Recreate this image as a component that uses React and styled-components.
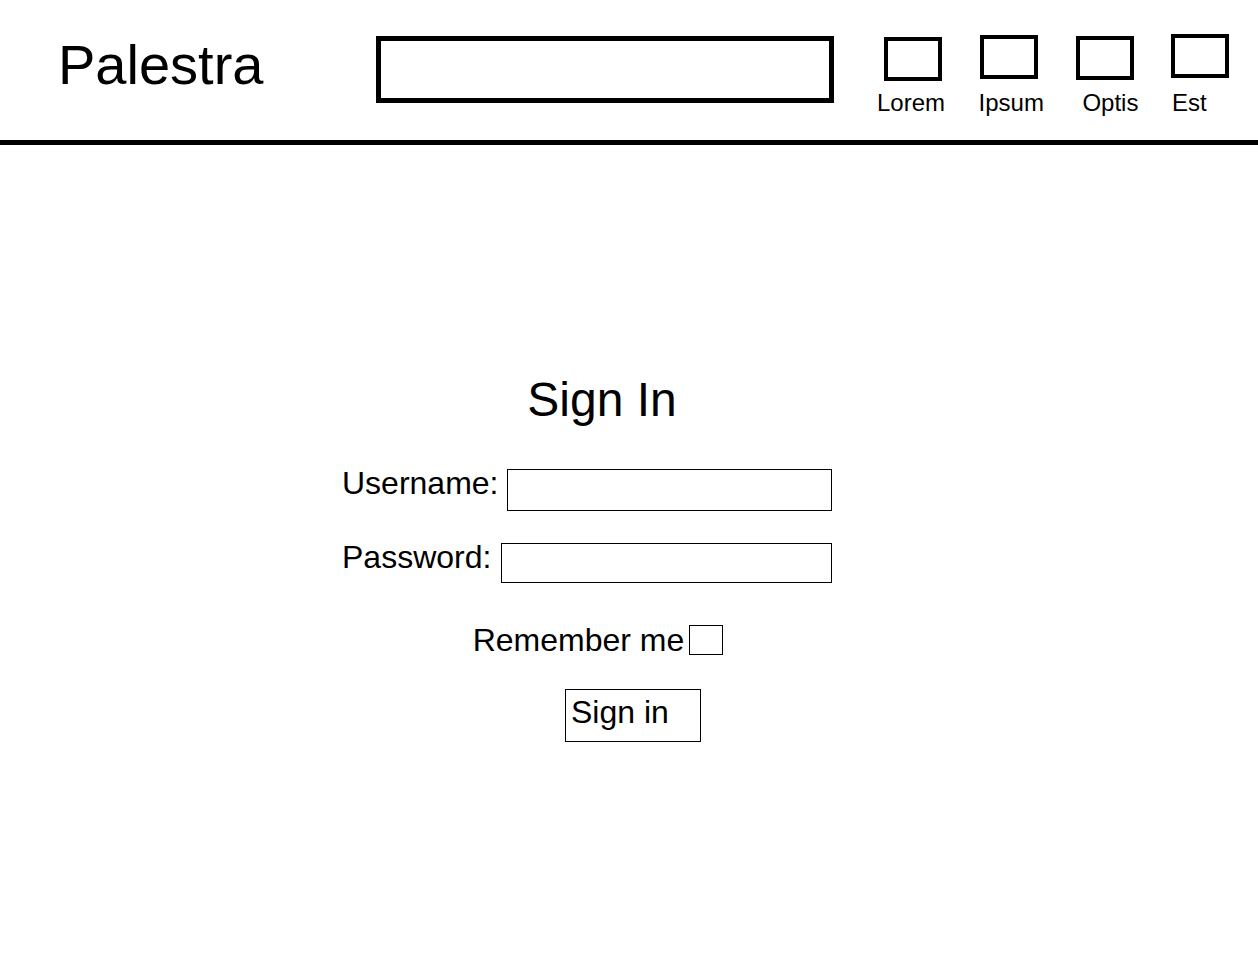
import React from "react";
import styled, { createGlobalStyle } from "styled-components";

const GlobalStyle = createGlobalStyle`
  html, body {
    margin: 0;
    padding: 0;
    background: #fff;
    color: #000;
    font-family: "Liberation Sans", Arial, sans-serif;
  }
  * {
    box-sizing: border-box;
  }
`;

const navItems = [
  { label: "Lorem", boxLeft: 8, boxTop: 3, labelLeft: 1 },
  { label: "Ipsum", boxLeft: 2, boxTop: 1, labelLeft: 1 },
  { label: "Optis", boxLeft: 0, boxTop: 2, labelLeft: 6 },
  { label: "Est", boxLeft: 0, boxTop: 0, labelLeft: 1 },
];

function App() {
  return (
    <Page>
      <GlobalStyle />
      <Header>
        <Brand>Palestra</Brand>
        <SearchBox type="text" aria-label="Search" />
        <Nav>
          {navItems.map((item) => (
            <NavItem key={item.label}>
              <NavBox $left={item.boxLeft} $top={item.boxTop} />
              <NavLabel $left={item.labelLeft}>{item.label}</NavLabel>
            </NavItem>
          ))}
        </Nav>
      </Header>
      <Main>
        <Form onSubmit={(e) => e.preventDefault()}>
          <Title>Sign In</Title>
          <FieldRow $gap={8}>
            <FieldLabel htmlFor="username">Username:</FieldLabel>
            <TextInput id="username" type="text" $height={42} />
          </FieldRow>
          <FieldRow $gap={10}>
            <FieldLabel htmlFor="password">Password:</FieldLabel>
            <TextInput id="password" type="password" $height={40} />
          </FieldRow>
          <RememberRow>
            <RememberLabel htmlFor="remember">Remember me</RememberLabel>
            <Checkbox id="remember" type="checkbox" />
          </RememberRow>
          <SubmitButton type="submit">Sign in</SubmitButton>
        </Form>
      </Main>
    </Page>
  );
}

const Page = styled.div`
  width: 100%;
  min-height: 100vh;
  background: #fff;
`;

const Header = styled.header`
  display: flex;
  align-items: flex-start;
  height: 145px;
  padding-left: 58px;
  border-bottom: 5px solid #000;
`;

const Brand = styled.div`
  flex: 0 0 318px;
  margin-top: 37px;
  font-size: 56px;
  line-height: 1;
  white-space: nowrap;
`;

const SearchBox = styled.input`
  appearance: none;
  flex: 0 0 458px;
  width: 458px;
  height: 67px;
  margin: 36px 0 0;
  padding: 0 10px;
  border: 5px solid #000;
  border-radius: 0;
  background: #fff;
  outline: none;
`;

const Nav = styled.nav`
  display: flex;
  gap: 32.5px;
  margin: 34px 0 0 42px;
`;

const NavItem = styled.div`
  display: flex;
  flex-direction: column;
  align-items: flex-start;
  height: 81px;
`;

const NavBox = styled.div`
  width: 58px;
  height: 44px;
  margin: ${(p) => p.$top}px 0 0 ${(p) => p.$left}px;
  border: 4px solid #000;
`;

const NavLabel = styled.span`
  margin: auto 0 0 ${(p) => p.$left}px;
  font-size: 24px;
  line-height: 1;
  white-space: nowrap;
`;

const Main = styled.main`
  display: flex;
  padding: 231px 0 0 342px;
`;

const Form = styled.form`
  display: flex;
  flex-direction: column;
  align-items: center;
  width: 520px;
`;

const Title = styled.h1`
  margin: 0 0 45px;
  font-size: 48px;
  font-weight: 400;
  line-height: 1;
`;

const FieldRow = styled.div`
  display: flex;
  align-items: flex-start;
  gap: ${(p) => p.$gap}px;
  align-self: stretch;
  margin-right: 30px;
  & + & {
    margin-top: 32px;
  }
`;

const FieldLabel = styled.label`
  margin-top: -2px;
  font-size: 32px;
  line-height: 1;
  white-space: nowrap;
`;

const TextInput = styled.input`
  appearance: none;
  flex: 1;
  min-width: 0;
  height: ${(p) => p.$height}px;
  margin: 0;
  padding: 0 6px;
  border: 1px solid #000;
  border-radius: 0;
  background: #fff;
  font-family: inherit;
  font-size: 20px;
  outline: none;
`;

const RememberRow = styled.div`
  display: flex;
  align-items: flex-start;
  gap: 5px;
  margin: 42px 8px 0 0;
`;

const RememberLabel = styled.label`
  margin-top: -1px;
  font-size: 32px;
  line-height: 1;
  white-space: nowrap;
`;

const Checkbox = styled.input`
  appearance: none;
  width: 34px;
  height: 30px;
  margin: 0;
  border: 1px solid #000;
  border-radius: 0;
  background: #fff;
  &:checked {
    background: #000;
  }
`;

const SubmitButton = styled.button`
  display: flex;
  align-items: flex-start;
  width: 136px;
  height: 53px;
  margin: 33px 0 0 62px;
  padding: 6px 0 0 5px;
  border: 1px solid #000;
  border-radius: 0;
  background: #fff;
  color: #000;
  font-family: inherit;
  font-size: 32px;
  line-height: 1;
  text-align: left;
  cursor: pointer;
`;

export default App;
